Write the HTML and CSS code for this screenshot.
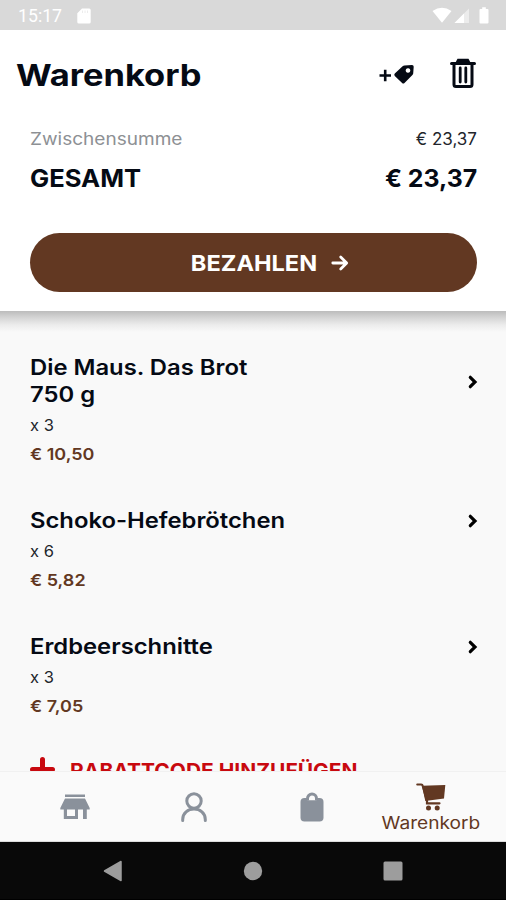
FILE: index.html
```html
<!DOCTYPE html>
<html lang="de">
<head>
    <meta charset="UTF-8">
    <meta name="viewport" content="width=device-width, initial-scale=1.0">
    <title>Warenkorb</title>
    <link rel="stylesheet" href="styles.css">
</head>
<body>
    <div class="status">
        <span class="uhrzeit">15:17</span>
        <svg class="sd" width="14" height="16" viewBox="0 0 14 16"><path d="M5 0.5h7.2a1.5 1.5 0 0 1 1.5 1.5v12a1.5 1.5 0 0 1-1.5 1.5H1.8A1.5 1.5 0 0 1 .3 14V5.300z" fill="#fff"/><path d="M5.500 2.500v2.500M8 2.500v2.500M10.500 2.500v2.500" stroke="#ececec"/></svg>
        <svg class="signale" width="58" height="18" viewBox="0 0 58 18">
            <path d="M.5 4Q10 -2.500 19.500 4L10 15.800z" fill="#fff"/>
            <path d="M37 1.500V16H22.500z" fill="#ececec"/>
            <path d="M32 6.500V16h-9.500z" fill="#fff"/>
            <path d="M48.500 2h1.700V.3h3.600V2h1.700q1 0 1 1v12.500q0 1-1 1h-7q-1 0-1-1V3q0-1 1-1z" fill="#fff"/>
        </svg>
    </div>

    <header>
        <div class="titelzeile">
            <h1>Warenkorb</h1>
            <svg class="gutschein" width="36" height="22" viewBox="0 0 36 22">
                <path d="M.5 11.500h11.500M6.200 5.800v11.400" stroke="#050a14" stroke-width="2.600" fill="none"/>
                <path fill-rule="evenodd" d="M25.500 1.600L33 1.100q1.700 0 1.700 1.700l-.5 6.700q-.1.900-.8 1.600l-7.900 7.800q-1.200 1-2.400 0l-7.300-7q-1.100-1.200 0-2.300l7.800-7.300q.7-.6 1.900-.7zM29 4.200a2.300 2.300 0 1 0 .01 0z" fill="#050a14"/>
            </svg>
            <svg class="muell" width="26" height="30" viewBox="0 0 26 30">
                <path d="M1.500 5.500h23M4 6v20.500q0 2 2 2h14q2 0 2-2V6" stroke="#050a14" stroke-width="3" fill="none" stroke-linecap="round"/>
                <path d="M5 5.500L7.500.8h11L21 5.500z" fill="#050a14"/>
                <path d="M10.200 10v14M15.800 10v14" stroke="#050a14" stroke-width="2.800" stroke-linecap="round"/>
            </svg>
        </div>
        <div class="zeile zwischen"><span class="label">Zwischensumme</span><span class="betrag">€ 23,37</span></div>
        <div class="zeile gesamt"><span class="label">GESAMT</span><span class="betrag">€ 23,37</span></div>
        <button class="bezahlen">
            <span>BEZAHLEN</span>
            <svg width="18" height="16" viewBox="0 0 18 16"><path d="M1.800 8H15M9.700 2l6 6-6 6" fill="none" stroke="#fff" stroke-width="2.800" stroke-linecap="round" stroke-linejoin="round"/></svg>
        </button>
    </header>

    <main>
        <div class="artikel">
            <h2>Die Maus. Das Brot<br>750 g</h2>
            <p class="menge">x 3</p>
            <p class="preis">€ 10,50</p>
            <svg class="pfeil" width="10" height="14" viewBox="0 0 10 14"><path d="M2.300 2.300L7 7l-4.700 4.700" /></svg>
        </div>
        <div class="artikel">
            <h2>Schoko-Hefebrötchen</h2>
            <p class="menge">x 6</p>
            <p class="preis">€ 5,82</p>
            <svg class="pfeil" width="10" height="14" viewBox="0 0 10 14"><path d="M2.300 2.300L7 7l-4.700 4.700" /></svg>
        </div>
        <div class="artikel">
            <h2>Erdbeerschnitte</h2>
            <p class="menge">x 3</p>
            <p class="preis">€ 7,05</p>
            <svg class="pfeil" width="10" height="14" viewBox="0 0 10 14"><path d="M2.300 2.300L7 7l-4.700 4.700" /></svg>
        </div>
        <div class="rabatt">
            <svg width="25" height="25" viewBox="0 0 25 25"><path d="M12.500 2.500v20M2.500 12.500h20" stroke="#c8090f" stroke-width="5" stroke-linecap="round"/></svg>
            <span>RABATTCODE HINZUFÜGEN</span>
        </div>
    </main>

    <nav>
        <a class="tab">
            <svg width="30" height="26" viewBox="0 0 30 26"><path fill-rule="evenodd" d="M5 .5h20V3H5zM5 4.500h20l4.700 9.500v1.500H26.800V25H23V15.500H18V25H3.800V15.500H.3V14zM7 15.500V22h8v-6.500z" fill="#8a919b"/></svg>
        </a>
        <a class="tab">
            <svg width="28" height="30" viewBox="0 0 28 30"><circle cx="14" cy="9" r="7.200"/><path d="M2.700 28.500v-1C2.700 21 8 17 14 17s11.300 4 11.300 10.500v1"/></svg>
        </a>
        <a class="tab">
            <svg width="24" height="30" viewBox="0 0 24 30"><rect x=".5" y="6" width="23" height="23.500" rx="4" fill="#8a919b"/><path d="M7.500 8.500V6.500a4.500 4.500 0 0 1 9 0v2" fill="#fafafa" stroke="#8a919b" stroke-width="3"/><path d="M4 8.500h16v3H4z" fill="#8a919b"/></svg>
        </a>
        <a class="tab aktiv">
            <svg width="30" height="28" viewBox="0 0 30 28"><path d="M6 2.800L29.300 2 28 15.500 9.300 18z" fill="#623822"/><path d="M1.300 1.500h3.900q1.200 0 1.500 1.200L11 18v2.300h12.500" fill="none" stroke="#623822" stroke-width="2.200" stroke-linecap="round"/><circle cx="12.500" cy="25" r="2.500" fill="#623822"/><circle cx="21.200" cy="25" r="2.500" fill="#623822"/></svg>
            <span>Warenkorb</span>
        </a>
    </nav>

    <div class="android">
        <svg width="20" height="22" viewBox="0 0 20 22"><path d="M18 1.500v19L1.500 11z" fill="#9d9d9d" stroke="#9d9d9d" stroke-width="1.500" stroke-linejoin="round"/></svg>
        <svg width="20" height="20" viewBox="0 0 20 20"><circle cx="10" cy="10" r="9.200" fill="#9d9d9d"/></svg>
        <svg width="20" height="20" viewBox="0 0 20 20"><rect x=".5" y=".5" width="19" height="19" rx="1.500" fill="#9d9d9d"/></svg>
    </div>
</body>
</html>
```
FILE: styles.css
```css
* {
    box-sizing: border-box;
}
body {
    font-family: Inter, "Open Sans", sans-serif;
    margin: 0;
    height: 900px;
    display: flex;
    flex-direction: column;
    overflow: hidden;
    background-color: #f9f9f9;
    color: #050a14;
}
svg {
    display: block;
    flex: none;
}
h1, h2, p {
    margin: 0;
}
.status {
    height: 30px;
    flex: none;
    display: flex;
    align-items: center;
    padding: 1px 16px 0 18px;
    background-color: #d9d9d9;
    color: white;
}
.uhrzeit {
    width: 59px;
    font-family: Roboto, sans-serif;
    font-size: 17.700px;
}
.signale {
    margin-left: auto;
}
header {
    flex: none;
    height: 281px;
    padding: 0 29px 0 30px;
    background-color: white;
}
.titelzeile {
    display: flex;
    align-items: center;
    height: 90px;
    margin-left: -14px;
}
/* wide letterforms */
h1, h2, .label, .preis, .rabatt span {
    transform-origin: left center;
}
h1 {
    font-size: 30px;
    font-weight: 700;
    transform: scaleX(1.148);
}
.gutschein {
    margin-left: auto;
    margin-right: 35px;
}
.muell {
    margin-right: 1px;
    margin-top: -4px;
}
.zeile {
    display: flex;
    justify-content: space-between;
    align-items: center;
}
.zwischen {
    height: 38px;
    font-size: 17px;
    font-weight: 400;
    color: #22252b;
}
.zwischen .label {
    color: #8d9094;
    transform: scaleX(1.12);
}
.gesamt {
    height: 40px;
    font-size: 24px;
    font-weight: 700;
}
.gesamt .label {
    transform: scaleX(1.065);
}
.gesamt .betrag {
    transform: scaleX(1.035);
    transform-origin: right center;
}
.bezahlen {
    display: flex;
    align-items: center;
    justify-content: center;
    gap: 19px;
    width: 100%;
    height: 59px;
    margin-top: 35px;
    padding: 0 0 0 37px;
    border: none;
    border-radius: 30px;
    background-color: #623822;
    color: white;
    font-family: inherit;
    font-size: 22px;
    font-weight: 700;
}
.bezahlen span {
    transform: scaleX(1.07);
}
main {
    flex: 1;
    min-height: 0;
    overflow: hidden;
    padding: 43px 29px 0 30px;
    background: linear-gradient(#bcbcbc, #d6d6d6 7px, #ececec 14px, #f9f9f9 21px);
}
.artikel {
    display: grid;
    grid-template-columns: 1fr 10px;
    margin-bottom: 39px;
}
.artikel h2, .artikel p {
    grid-column: 1;
}
h2 {
    font-size: 21.500px;
    line-height: 27px;
    font-weight: 600;
    margin-bottom: 3px;
    transform: scaleX(1.107);
}
.menge, .preis {
    line-height: 28px;
    font-size: 16.500px;
}
.menge {
    color: #22252b;
}
.preis {
    margin-top: 1px;
    font-weight: 600;
    color: #623822;
    transform: scaleX(1.09);
}
.pfeil {
    grid-column: 2;
    grid-row: 1;
    align-self: center;
    margin: -2px -1px 0 1px;
    fill: none;
    stroke: #000;
    stroke-width: 3.200px;
    stroke-linecap: round;
}
.rabatt {
    display: flex;
    align-items: center;
    gap: 15px;
    height: 24px;
    font-size: 20px;
    font-weight: 700;
    color: #c8090f;
}
.rabatt svg {
    margin-top: -3px;
}
.rabatt span {
    transform: scaleX(1.047);
}
nav {
    flex: none;
    display: flex;
    height: 71px;
    padding: 0 16px;
    border-top: 1px solid #f1f1f1;
    border-bottom: 1px solid #dcdcdc;
    background-color: #fafafa;
}
.tab {
    flex: 1;
    display: flex;
    flex-direction: column;
    align-items: center;
    justify-content: center;
}
.tab:nth-child(2) svg {
    fill: none;
    stroke: #8a919b;
    stroke-width: 3;
    stroke-linecap: round;
}
.aktiv {
    justify-content: flex-start;
    padding-top: 11px;
    font-size: 17px;
    line-height: 24px;
    color: #623822;
}
.aktiv span {
    transform: scaleX(1.125);
}
.android {
    flex: none;
    display: flex;
    justify-content: space-between;
    align-items: center;
    height: 58px;
    padding: 0 103px;
    background-color: #090909;
    border-bottom: 1px solid #000;
}
```
